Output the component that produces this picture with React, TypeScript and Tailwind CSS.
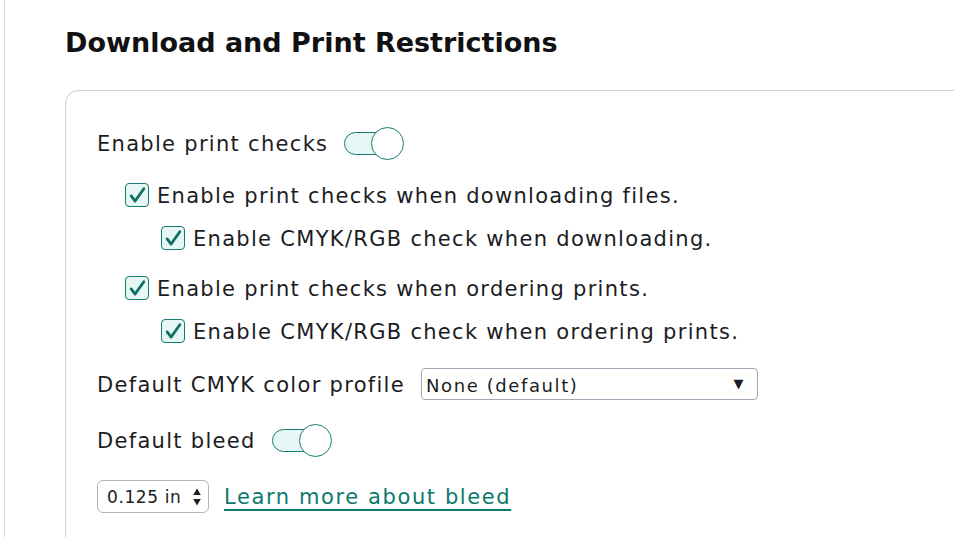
import React from "react"

function Toggle() {
  return (
    <span className="relative inline-block w-[60px] h-[33px] shrink-0">
      <span className="absolute left-0 top-[5px] w-[50px] h-[23px] rounded-full border border-[#177a70] bg-[#e6f6f4]" />
      <span className="absolute right-0 top-0 w-[33px] h-[33px] rounded-full border border-[#177a70] bg-white" />
    </span>
  )
}

function Check() {
  return (
    <span className="flex items-center justify-center w-[24px] h-[24px] rounded-[4px] border-[1.5px] border-[#177a70] bg-[#e6f6f4] shrink-0">
      <svg width="19" height="19" viewBox="0 0 24 24" fill="none" stroke="#0e6f64" strokeWidth="3.6" strokeLinecap="round" strokeLinejoin="round">
        <path d="M4 12.5l5 6.5L20 3.5" />
      </svg>
    </span>
  )
}

function CheckRow({ label, indent, mt }: { label: string; indent: string; mt: string }) {
  return (
    <div className={`flex items-center gap-[8px] h-[24px] ${indent} ${mt}`}>
      <Check />
      <span className="pt-[3px]">{label}</span>
    </div>
  )
}

export default function App() {
  return (
    <div className="flex h-[537px] w-[954px] overflow-hidden bg-white text-[#1c1c24]" style={{ fontFamily: "'DejaVu Sans', sans-serif" }}>
      <div className="w-[5px] shrink-0 border-r border-[#d3d8e4]" />
      <div className="pl-[60px] pt-[25px] flex flex-col">
        <h1 className="text-[27px] leading-[35px] font-bold text-[#111]">Download and Print Restrictions</h1>
        <div className="mt-[30px] w-[1000px] h-[600px] rounded-tl-[14px] border-l border-t border-[#cdd2e1] pl-[31px] pt-[36px] text-[21px] tracking-[1.3px]">
          <div className="flex items-center gap-[16px] h-[32px]">
            <span className="pt-[3px]">Enable print checks</span>
            <Toggle />
          </div>
          <CheckRow label="Enable print checks when downloading files." indent="ml-[28px]" mt="mt-[24px]" />
          <CheckRow label="Enable CMYK/RGB check when downloading." indent="ml-[64px]" mt="mt-[19px]" />
          <CheckRow label="Enable print checks when ordering prints." indent="ml-[28px]" mt="mt-[26px]" />
          <CheckRow label="Enable CMYK/RGB check when ordering prints." indent="ml-[64px]" mt="mt-[19px]" />
          <div className="flex items-center gap-[16px] mt-[25px] h-[32px]">
            <span className="pt-[3px]">Default CMYK color profile</span>
            <div className="flex items-center justify-between w-[337px] h-[32px] rounded-[4px] border border-[#a3a6b4] pl-[4px] pr-[12px] text-[18px] tracking-[1.6px]">
              <span className="pt-[2px]">None (default)</span>
              <span className="text-[13px]">▼</span>
            </div>
          </div>
          <div className="flex items-center gap-[16px] mt-[24px] h-[33px]">
            <span className="pt-[3px]">Default bleed</span>
            <Toggle />
          </div>
          <div className="flex items-center gap-[15px] mt-[23px] h-[33px]">
            <div className="flex items-center justify-between w-[112px] h-[33px] rounded-[6px] border border-[#b3b6c2] pl-[9px] pr-[7px] text-[17px] tracking-[0.6px]">
              <span className="pt-[2px]">0.125 in</span>
              <svg width="8" height="18" viewBox="0 0 8 18" fill="#1c1c24">
                <path d="M4 0.5L7.8 7H0.2z" />
                <path d="M4 17.5L7.8 11H0.2z" />
              </svg>
            </div>
            <a href="#" className="pt-[3px] text-[#0b7a6c] underline underline-offset-[5px] decoration-[2px] tracking-[1.6px]">Learn more about bleed</a>
          </div>
        </div>
      </div>
    </div>
  )
}
